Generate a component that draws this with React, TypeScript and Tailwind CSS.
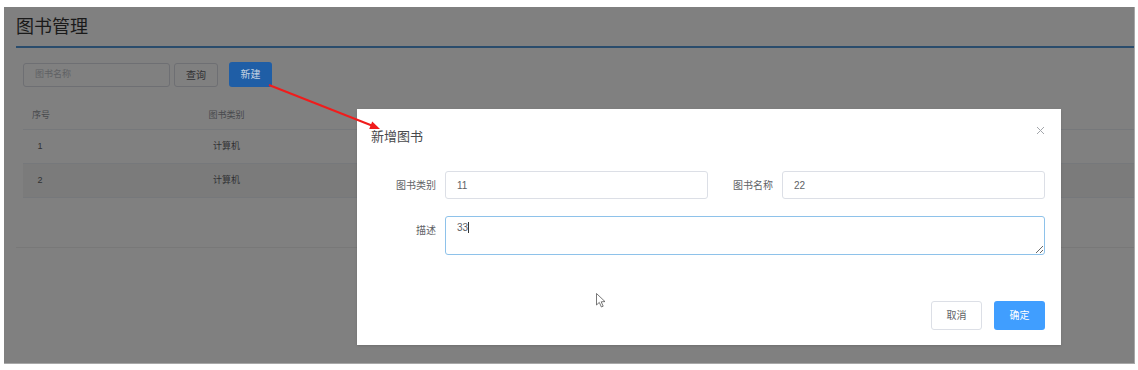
import React from 'react';

const font = "font-['Liberation_Sans','Noto_Sans_CJK_SC',sans-serif]";

const rows = [
  { id: 1, type: '计算机' },
  { id: 2, type: '计算机' },
];

function PageBehind() {
  return (
    <div className="flex flex-col h-full">
      <div className="ml-[12px] h-[41px] border-b-2 border-[#2a4c6c] pt-[8px]">
        <h1 className="text-[18px] leading-[24px] text-[#1a1a1a]">图书管理</h1>
      </div>

      <div className="flex items-center mt-[15px] ml-[19px]">
        <div className="w-[147px] h-[24px] rounded-[3px] border border-[#6e6f73] flex items-center pl-[11px] text-[9px] text-[#5f6064]">
          图书名称
        </div>
        <button className="ml-[4px] w-[44px] h-[24px] rounded-[3px] border border-[#6e6f73] text-[10px] text-[#303133]">
          查询
        </button>
        <button className="ml-[11px] w-[43px] h-[25px] rounded-[3px] bg-[#1f5ea6] text-[10px] text-[#c4d2e2] -mt-[1px]">
          新建
        </button>
      </div>

      <div className="ml-[19px] mt-[12px] text-[9px]">
        <div className="flex h-[31px] items-center pt-[4px] border-b border-[#76787b] text-[#484a4d]">
          <div className="w-[36px] text-center">序号</div>
          <div className="w-[335px] text-center">图书类别</div>
        </div>
        {rows.map((r, i) => (
          <div
            key={r.id}
            className={`flex h-[34px] items-center border-b border-[#76787b] text-[#303133] ${i % 2 === 1 ? 'bg-[#7b7b7b]' : ''}`}
          >
            <div className="w-[34px] text-center">{r.id}</div>
            <div className="w-[339px] text-center">{r.type}</div>
          </div>
        ))}
      </div>

      <div className="ml-[12px] mt-[49px] border-t border-[#787878]" />
    </div>
  );
}

function Field({ label, value }: { label: string; value: string }) {
  return (
    <div className="flex w-[337px] items-center">
      <label className="w-[74px] pr-[9px] text-right text-[10px] text-[#606266]">{label}</label>
      <input
        readOnly
        value={value}
        className="w-[263px] h-[28px] rounded-[3px] border border-[#dcdfe6] px-[11px] text-[10px] text-[#606266] outline-none"
      />
    </div>
  );
}

function BookDialog() {
  return (
    <div className="absolute left-[353px] top-[102px] w-[704px] h-[236px] bg-white shadow-sm flex flex-col">
      <div className="pt-[15px] px-[14px] h-[33px]">
        <span className="text-[13px] leading-[18px] text-[#48494c]">新增图书</span>
      </div>
      <button className="absolute right-[16px] top-[17px] w-[9px] h-[9px]" aria-label="close">
        <svg viewBox="0 0 9 9" width="9" height="9">
          <path d="M1 1 L8 8 M8 1 L1 8" stroke="#a3a6ab" strokeWidth="1" fill="none" />
        </svg>
      </button>

      <div className="pl-[14px] pr-[16px] pt-[29px]">
        <div className="flex">
          <Field label="图书类别" value="11" />
          <Field label="图书名称" value="22" />
        </div>
        <div className="flex mt-[17px]">
          <label className="w-[74px] pr-[9px] text-right text-[10px] leading-[30px] text-[#606266]">描述</label>
          <div className="relative">
            <textarea
              readOnly
              defaultValue="33"
              className="block w-[600px] h-[39px] rounded-[3px] border border-[#8ec2ea] px-[11px] py-[4px] text-[10px] leading-[14px] text-[#606266] outline-none"
            />
            <span className="absolute left-[23px] top-[6px] w-px h-[11px] bg-[#333]" />
          </div>
        </div>
      </div>

      <div className="mt-auto flex justify-end gap-[12px] pr-[16px] pb-[15px]">
        <button className="w-[51px] h-[29px] rounded-[3px] border border-[#dcdfe6] text-[10px] text-[#606266]">
          取消
        </button>
        <button className="w-[51px] h-[29px] rounded-[3px] bg-[#409eff] text-[10px] text-white">
          确定
        </button>
      </div>
    </div>
  );
}

export default function App() {
  return (
    <div className={`relative w-[1138px] h-[370px] bg-white pt-[7px] pl-[4px] ${font}`}>
      <div className="relative w-[1131px] h-[357px] bg-[#808080] overflow-hidden border-r border-b border-[#a8a8a8]">
        <PageBehind />
        <BookDialog />
      </div>

      {/* annotation arrow + mouse pointer */}
      <svg className="absolute inset-0 pointer-events-none" width="1138" height="370">
        <line x1="269" y1="85" x2="373" y2="126" stroke="#f01c1c" strokeWidth="2" />
        <polygon points="380,129 369.2,129.1 372.2,121.6" fill="#f01c1c" />
        <path
          d="M596.5 293.5 L596.5 305 L599.3 302.4 L601.4 307 L603.2 306.2 L601.2 301.8 L605 301.6 Z"
          fill="white"
          stroke="#555"
          strokeWidth="0.8"
        />
      </svg>
    </div>
  );
}
